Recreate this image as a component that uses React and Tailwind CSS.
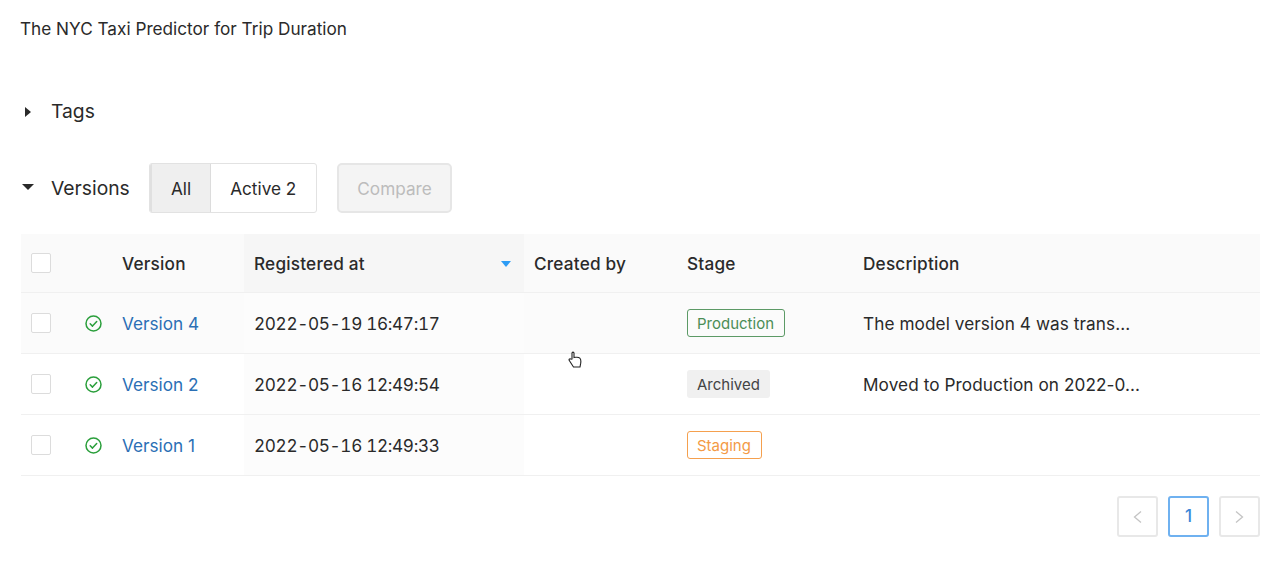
const versions = [
  { name: "Version 4", date: "2022-05-19 16:47:17", stage: "Production", description: "The model version 4 was trans...", hovered: true },
  { name: "Version 2", date: "2022-05-16 12:49:54", stage: "Archived", description: "Moved to Production on 2022-0..." },
  { name: "Version 1", date: "2022-05-16 12:49:33", stage: "Staging", description: "" },
];

const Checkbox = () => (
  <span className="block w-[20px] h-[20px] bg-white border border-[#dcdcdc] rounded-[2px]" />
);

const StatusIcon = () => (
  <svg width="17" height="17" viewBox="0 0 17 17" fill="none" stroke="#2b9f3c" strokeWidth="1.5">
    <circle cx="8.5" cy="8.5" r="7.5" />
    <path d="M5.200 8.800l2.300 2.300 4.200-4.600" strokeLinecap="round" strokeLinejoin="round" />
  </svg>
);

const StageTag = ({ stage }) => {
  if (stage === "Production") {
    return (
      <span className="inline-flex items-center h-[28px] pl-[9px] pr-[10px] pt-[2px] text-[15px] rounded-[3px] border border-[#5c9a66] text-[#4b8d56]">
        {stage}
      </span>
    );
  }
  if (stage === "Staging") {
    return (
      <span className="inline-flex items-center h-[28px] pl-[9px] pr-[10px] pt-[2px] text-[15px] rounded-[3px] border border-[#f5a04e] text-[#f39a45]">
        {stage}
      </span>
    );
  }
  return (
    <span className="inline-flex items-center h-[28px] px-[10px] pt-[2px] text-[15px] rounded-[3px] bg-[#f0f0f0] text-[#444444]">
      {stage}
    </span>
  );
};

const Pager = ({ children, active }) => (
  <span
    className={
      active
        ? "flex items-center justify-center w-[41px] h-[41px] rounded-[3px] border-2 border-[#6fb1f0] text-[#3b87d8] text-[17px] font-medium"
        : "flex items-center justify-center w-[41px] h-[41px] rounded-[3px] border-2 border-[#e8e8e8] text-[#c4c4c4]"
    }
  >
    {children}
  </span>
);

const gridCols = "grid grid-cols-[54px_37px_132px_280px_153px_176px_1fr]";

export default function App() {
  return (
    <div className="w-[1280px] h-[580px] overflow-hidden bg-white text-[#2a2a2a] font-['Inter','Liberation_Sans',sans-serif] pl-[21px] pr-[20px] pt-[18px]">
      <p className="-ml-px text-[17.2px] leading-[21px] h-[21px]">The NYC Taxi Predictor for Trip Duration</p>

      {/* TAGS */}
      <div className="flex items-center h-[26px] mt-[60px]">
        <svg width="8" height="12" viewBox="0 0 8 12" className="ml-[3px] fill-[#2a2a2a]">
          <path d="M1 1l6 5-6 5z" />
        </svg>
        <span className="ml-[19px] -mt-px text-[19.3px]">Tags</span>
      </div>

      {/* VERSIONS */}
      <div className="flex items-center h-[50px] mt-[38px]">
        <svg width="12" height="8" viewBox="0 0 12 8" className="ml-[1px] -mt-[3px] fill-[#2a2a2a]">
          <path d="M0 1h12L6 7z" />
        </svg>
        <span className="ml-[17px] w-[78px] text-[19.3px] whitespace-nowrap">Versions</span>
        <div className="flex ml-[20px] h-[50px] border border-[#e2e2e2] rounded-[3px] overflow-hidden text-[17.2px]">
          <span className="flex items-center pt-[1px] px-[19px] bg-[#efefef] border-r border-[#dcdcdc] border-l-2 border-l-[#e0e0e0]">All</span>
          <span className="flex items-center pt-[1px] pl-[19px] pr-[20px]">Active 2</span>
        </div>
        <span className="flex items-center ml-[20px] h-[50px] pt-[1px] px-[18px] bg-[#f4f4f4] border-2 border-[#e6e6e6] rounded-[5px] text-[17.2px] text-[#bcbcbc]">
          Compare
        </span>
      </div>

      {/* TABLA */}
      <div className="mt-[21px] text-[17.2px]">
        <div className={`${gridCols} h-[59px] items-center bg-[#fafafa] border-b border-[#f0f0f0] font-medium tracking-[0.2px]`}>
          <div className="pl-[10px]">
            <Checkbox />
          </div>
          <div />
          <div className="pl-[10px] pt-[1px]">Version</div>
          <div className="flex items-center justify-between h-full pl-[10px] pr-[13px] pt-[1px] bg-[#f6f6f6]">
            <span>Registered at</span>
            <svg width="10" height="6" viewBox="0 0 10 6" className="fill-[#2d9cf5]">
              <path d="M0 0h10L5 6z" />
            </svg>
          </div>
          <div className="pl-[10px] pt-[1px]">Created by</div>
          <div className="pl-[10px] pt-[1px]">Stage</div>
          <div className="pl-[10px] pt-[1px]">Description</div>
        </div>

        {versions.map((version) => (
          <div
            key={version.name}
            className={`${gridCols} h-[61px] items-center border-b border-[#f0f0f0] ${version.hovered ? "bg-[#fbfbfb]" : "bg-white"}`}
          >
            <div className="pl-[10px]">
              <Checkbox />
            </div>
            <div className="flex justify-center">
              <StatusIcon />
            </div>
            <div className="pl-[10px] pt-[1px] text-[#2b6fb5]">{version.name}</div>
            <div className="flex items-center h-full pl-[10px] pt-[1px] bg-[#fcfcfc] tabular-nums tracking-[-0.35px]">{version.date}</div>
            <div />
            <div className="pl-[10px]">
              <StageTag stage={version.stage} />
            </div>
            <div className="pl-[10px] pt-[1px] tracking-[0.08px]">{version.description}</div>
          </div>
        ))}
      </div>

      {/* PAGINACIÓN */}
      <div className="flex justify-end gap-[10px] mt-[20px]">
        <Pager>
          <svg width="11" height="14" viewBox="0 0 11 14" fill="none" stroke="currentColor" strokeWidth="1.3">
            <path d="M9 1.500L2.500 7 9 12.500" />
          </svg>
        </Pager>
        <Pager active>1</Pager>
        <Pager>
          <svg width="11" height="14" viewBox="0 0 11 14" fill="none" stroke="currentColor" strokeWidth="1.3">
            <path d="M2 1.500L8.500 7 2 12.500" />
          </svg>
        </Pager>
      </div>

      {/* CURSOR */}
      <svg width="14" height="17" viewBox="0 0 14 17" className="absolute left-[568px] top-[351px]" fill="#ffffff" stroke="#222222" strokeWidth="1.1">
        <path d="M4 8V2.200c0-1.400 2-1.400 2 0V6.500c1.200-.5 4.600-.3 5.800.7 1 .9 1.200 3 .9 5l-.7 3.800H5.500L1.300 9.500c-.8-1.200.8-2.300 1.700-1.300z" />
      </svg>
    </div>
  );
}
